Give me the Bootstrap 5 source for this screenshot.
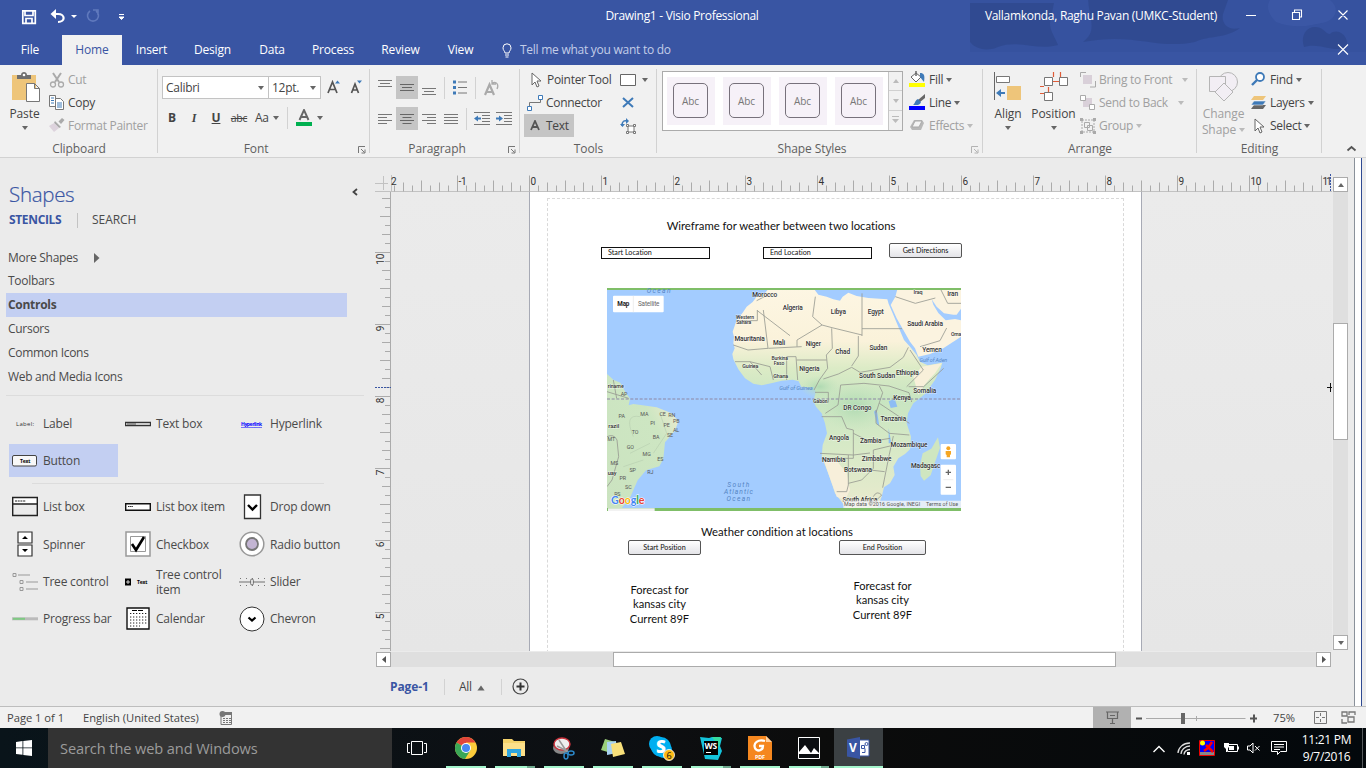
<!DOCTYPE html>
<html lang="en">
<head>
<meta charset="utf-8">
<meta name="viewport" content="width=device-width, initial-scale=1">
<title>Drawing1 - Visio Professional</title>
<link href="https://cdn.jsdelivr.net/npm/bootstrap@5.3.0/dist/css/bootstrap.min.css" rel="stylesheet">
<style>
:root{--blue:#3955a3;--ink:#444;--dim:#a0a0a0;--chrome:#ebebeb;--edge:#ababab}
html,body{height:100%;overflow:hidden}
body{font:12px/16px "Open Sans","Noto Sans",sans-serif;color:var(--ink);background:var(--chrome);width:1366px;height:768px;letter-spacing:-.29px}
svg{display:block;flex:none}
.dim{color:var(--dim)}
.tri{flex:none;width:0;height:0;border:3.5px solid transparent;border-top:4px solid #666;border-bottom:0}
.dim .tri,.tri.off{border-top-color:#bbb}
/* title bar and tabs */
.topzone{height:65px;background:var(--blue);color:#fff}
.scribble{left:970px;top:0;z-index:0}
.titlerow{height:35px}.titlerow .quick{width:130px;padding:8px 0 0 20px}
.doc{width:160px;margin-left:472px}.user{width:240px;margin-left:219px;margin-right:22px;white-space:nowrap}
.tabs{height:30px;padding-left:8px;letter-spacing:-.15px}
.tabs>span{height:30px;display:flex;align-items:center;justify-content:center}
.tabs .on{background:#f1f1f1;color:var(--blue);margin-left:10px}
.tabs .tell{color:#c3cde8;letter-spacing:-.26px}
.w44{width:44px}.w60{width:60px}.w59{width:59px}.w63{width:63px}.w56{width:56px}.w66{width:66px}.w69{width:69px}.w51{width:51px}
/* ribbon */
.ribbon{height:93px;background:#f1f1f1;border-bottom:1px solid #d2d2d2}
.grp{position:relative;display:flex;flex-direction:column;height:92px;flex:none}
.grp::after{content:"";position:absolute;right:0;top:4px;bottom:4px;width:1px;background:#d2d2d2}
.g158{width:158px}.g212{width:212px}.g150{width:150px}.g137{width:137px}.g326{width:326px}.g214{width:214px}.g125{width:125px}
.body3{height:76px;display:flex;padding-top:3px}
.lab{height:16px;display:flex;color:#5f5f5f;letter-spacing:-.1px}.lab span{flex:1;text-align:center}
.lab svg{margin:5px 4px 0 4px}
.r{height:23px;display:flex;align-items:center;white-space:nowrap;gap:3px}
.big{display:flex;flex-direction:column;align-items:center;text-align:center;padding-top:4px;letter-spacing:-.1px}
.big span+.tri,.big .tri.mt-1{margin-top:4px}
.combo{height:23px;border:1px solid #c3c3c3;background:#fff;display:flex;align-items:center;justify-content:space-between;padding:0 4px 0 3px}
.cell{width:22px;height:23px;display:flex;align-items:center;justify-content:center;flex:none}
.hl{background:#c5c5c5}
.vs{width:1px;height:22px;background:#d2d2d2;flex:none}
.gal{width:241px;height:60px;border:1px solid var(--edge);background:#fff;margin:3px 0 0 5px}
.thumb{width:48px;height:48px;background:#f6f1f8;padding:6px;margin:5px 4px 0 4px}
.thumb div{width:35px;height:35px;border:1px solid #77717b;border-radius:5px;display:flex;align-items:center;justify-content:center;font-size:10px;color:#777;letter-spacing:-.1px}
.galbar{width:14px;background:#f1f1f1;border-left:1px solid #c6c6c6}
.galbar div{height:19.4px;display:flex;align-items:center;justify-content:center;border-bottom:1px solid #d0d0d0}
.galbar .up{transform:rotate(180deg)}
/* shapes pane */
.work{height:548px}
.pane{width:375px;color:#4a4a4a}
.ttl{font-size:20.5px;line-height:26px;color:var(--blue);padding:23px 0 0 9px;height:50px;letter-spacing:-.3px;font-weight:300;-webkit-text-stroke:.2px var(--blue)}
.stn{height:24px;padding-left:9px}
.names>div{height:24px;padding-left:2px;margin:0 28px 0 6px;display:flex;align-items:center}
.pick{background:#c3cff2}
.rule1{height:1px;background:#dcdcdc}
.st{display:grid;grid-template-columns:113px 114px 125px;margin-left:9px;letter-spacing:-.2px}
.st>div{height:37px;display:flex;align-items:center;line-height:15px}
.st svg{margin-right:5px;margin-left:3px}
/* drawing window */
.draw{width:979px}
.sheetarea{width:941px;height:459px;overflow:hidden;position:relative;background:linear-gradient(#ebebeb,#e6e6e6)}
.paper{position:absolute;left:138px;top:0;width:613px;height:459px;background:#fff;border:solid #a7aab5;border-width:0 1px}
.marg{position:absolute;left:17px;top:6px;width:577px;height:470px;border:1px dashed #d9d9d9}
.it{position:absolute;white-space:nowrap;color:#111;font-family:Lato,"Open Sans",sans-serif;text-align:center;letter-spacing:0;font-variant-ligatures:none}
.head1{font-size:11.3px;line-height:15px}
.field{border:1px solid #111;height:12px;width:109px;font-size:7.2px;line-height:9px;text-align:left;padding-left:6px}
.pbtn{border:1px solid #555;border-radius:2px;background:linear-gradient(#fff,#e4e4e8);height:15px;font-size:7.2px;line-height:13px}
.fc{font-size:11.1px;line-height:14.4px}
.sbtn{width:15px;height:15px;border:1px solid var(--edge);background:#fff;display:flex;align-items:center;justify-content:center;flex:none}
.trk{background:#dfdfdf}
.th{background:#fff;border:1px solid var(--edge)}
/* bars */
.status{height:22px;background:#f1f1f1;border-top:1px solid #bdbdbd;font-size:11.2px;letter-spacing:-.02px}
.task{height:40px;background:linear-gradient(90deg,#09141a,#0d0f12 45%,#0c0c0c 60%,#03080c)}
.find{width:344px;background:#333;color:#9b9b9b;font-size:14.6px;padding-left:12px;letter-spacing:-.1px}
.app{width:49px;height:40px;display:flex;align-items:center;justify-content:center;position:relative}
.app.run::after{content:"";position:absolute;left:4.5px;width:40px;bottom:0;height:2px;background:#a4f5cc}
.app.many::before{content:"";position:absolute;right:4.5px;width:8px;bottom:0;height:2px;background:#6fa98e;z-index:1}
.app.act{background:#3b4043}.app.act::after{left:0;width:49px}
.clock{width:65px;margin:0 3px 0 4px;line-height:17px}
</style>
</head>
<body class="d-flex flex-column">
<svg width="0" height="0" class="position-absolute"><defs>
<symbol id="launch" viewBox="0 0 8 8"><path d="M.5 7V.5H7M3 3l3.500 3.500M7 3.500V7H3.500" fill="none" stroke="#777"/></symbol>
<symbol id="arrow" viewBox="0 0 10 16"><path d="M1 1v12l3-3 2 5 2-1-2-5h4z" fill="#fff" stroke="#666" stroke-width="1"/></symbol>
</defs></svg>

<header class="topzone position-relative">
  <svg class="position-absolute scribble" width="396" height="52" viewBox="0 0 396 52"><path d="M0 0h396v52H0z" fill="#314d97" opacity=".35"/><path d="M0 3h84l-4 20c0 8 4 12 8 22-20 6-40-6-60 2-14 6-24 0-28-5zM118 0h140l-5 14c-2 10 5 17 17 14-15 11-30 7-45 14-40 8-60-10-112 0 15-12 6-22 5-44zM334 47c-4-12 3-21 12-20 9 1 9 7 14 7 6-6 17 0 17 9 0 5-4 6-7 6-12 1-22-6-36-2z" fill="#2e478c" opacity=".7"/><path d="M300 0h60c10 8 6 18-4 22-14 3-30 8-50 0-8-8-10-16-6-22z" fill="#4460b0" opacity=".4"/></svg>
  <div class="titlerow d-flex position-relative">
    <div class="quick d-flex">
      <svg width="104" height="17" viewBox="20 8 104 17"><path d="M22.800 10.800h12.500v12.500h-12.500zM25 11v4.500h8V11M26 23v-4.500h6V23" fill="none" stroke="#fff" stroke-width="1.700"/><path d="M53 14h5c7.500 0 7.500 8 0 8" fill="none" stroke="#fff" stroke-width="2.200"/><path d="M50.500 14l5.500-5v10z" fill="#fff"/><path d="M71 15h6l-3 3z" fill="#fff"/><path d="M90 11a5.500 5.500 0 1 0 6 0M93 10h5v5" fill="none" stroke="#6079bd" stroke-width="1.600"/><path d="M119 14.500h5M119 17h5l-2.500 2.500z" stroke="#fff" fill="#fff" stroke-width="1"/></svg>
    </div>
    <div class="doc d-flex align-items-center justify-content-center pb-1">Drawing1 - Visio Professional</div>
    <div class="user d-flex align-items-center justify-content-center pb-1">Vallamkonda, Raghu Pavan (UMKC-Student)</div>
    <svg width="110" height="30" viewBox="1243 0 110 30"><path d="M1246 15.500h10M1292.500 12.500h7v7h-7zM1294.500 12v-2h7v7h-2M1338.500 10.500l9 9m0-9l-9 9" fill="none" stroke="#fff" stroke-width="1.100"/></svg>
  </div>
  <nav class="tabs d-flex position-relative"><span class="w44">File</span><span class="w60 on">Home</span><span class="w59">Insert</span><span class="w63">Design</span><span class="w56">Data</span><span class="w66">Process</span><span class="w69">Review</span><span class="w51">View</span>
    <span class="tell ms-3 gap-2"><svg width="10" height="15" viewBox="0 0 10 15"><path d="M3 10C3 8 1 7.500 1 4.800a4 4 0 0 1 8 0C9 7.500 7 8 7 10zM3 12h4M3.500 14h3" fill="none" stroke="#fff"/></svg>Tell me what you want to do</span>
    <svg class="ms-auto me-3 mt-2" width="16" height="14" viewBox="0 0 16 14"><path d="M4 1.500l10 10m0-10l-10 10" stroke="#fff" stroke-width="1.100"/></svg>
  </nav>
</header>

<section class="ribbon d-flex">
  <div class="grp g158">
    <div class="body3">
      <div class="big" style="width:49px"><svg class="ms-1" width="29" height="31" viewBox="0 0 29 31"><path d="M0 3h24v25H0z" fill="#eec57a"/><path d="M5 7V3h4c0-4 6-4 6 0h4v4z" fill="#6f6f6f"/><circle cx="12" cy="3" r="1.300" fill="#fff"/><path d="M14.500 11.500h8l5 5v13h-13zM22.500 11.500v5h5" fill="#fff" stroke="#777"/></svg><span style="margin-top:3px">Paste</span><i class="tri mt-1"></i></div>
      <div><div class="r dim"><svg width="16" height="16" viewBox="0 0 16 16"><path d="M4 1l6 9M12 1L6 10" stroke="#aaa" stroke-width="2"/><circle cx="4" cy="12.500" r="2.500" fill="none" stroke="#aaa" stroke-width="1.300"/><circle cx="12" cy="12.500" r="2.500" fill="none" stroke="#aaa" stroke-width="1.300"/></svg>Cut</div>
      <div class="r"><svg width="16" height="15" viewBox="0 0 16 15"><path d="M.5.5h6v11h-6z" fill="#fff" stroke="#777"/><path d="M6.500 3.500h5l3 3v8h-8z" fill="#fff" stroke="#777"/><path d="M2 3h3M2 5.500h3M2 8h3M8 8h5M8 10h5M8 12h5" stroke="#3e7ab8"/></svg>Copy</div>
      <div class="r dim"><svg width="16" height="15" viewBox="0 0 16 15"><path d="M13 0l2.500 2L12 6 9.500 3.500z" fill="#aaa"/><path d="M6 3l6 6-2 1-5-5z" fill="#aaa"/><path d="M5 5l5 5-5 4-5-6z" fill="#ddd3dd"/></svg>Format Painter</div></div>
    </div><div class="lab"><span>Clipboard</span></div>
  </div>
  <div class="grp g212">
    <div class="body3 flex-column">
      <div class="d-flex" style="margin:8px 0 8px 4px"><div class="combo" style="width:107px">Calibri<i class="tri"></i></div><div class="combo border-start-0" style="width:52px">12pt.<i class="tri"></i></div>
      <svg class="ms-1" width="40" height="20" viewBox="325 75.500 40 20"><path d="M328 92.500l4.500-11 4.500 11M329.500 89h6.500M351.500 92.500l3.500-9 3.500 9M352.500 89.500h5" fill="none" stroke="#555" stroke-width="1.700"/><path d="M335 83l2.500-3 2.500 3zM357 80h5l-2.500 3z" fill="#3e7ab8"/></svg></div>
      <div class="d-flex align-items-center" style="height:22px;margin-left:3px"><span class="cell fw-bold">B</span><span class="cell fw-bold fst-italic" style="font-family:'Liberation Serif'">I</span><span class="cell fw-bold text-decoration-underline">U</span><span class="cell text-decoration-line-through" style="width:24px;font-size:10.500px">abc</span><span class="ms-1">Aa</span><i class="tri ms-1"></i><i class="vs ms-2 me-2"></i>
      <svg width="16" height="18" viewBox="0 0 16 18"><path d="M3.500 11L8 1l4.500 10M5 8h6" fill="none" stroke="#666" stroke-width="1.900"/><path d="M0 13h16v4H0z" fill="#00b050"/></svg><i class="tri" style="margin-left:5px"></i></div>
    </div><div class="lab"><span>Font</span><svg width="8" height="8"><use href="#launch"/></svg></div>
  </div>
  <div class="grp g150">
    <div class="body3 flex-column">
      <div class="d-flex align-items-center" style="margin:8px 0 8px 4px"><span class="cell"><svg width="14" height="17"><path d="M0 1.500h14M2 4.500h10M0 7.500h14" stroke="#777"/></svg></span><span class="cell hl"><svg width="14" height="17"><path d="M0 5.500h14M2 8.500h10M0 11.500h14" stroke="#666"/></svg></span><span class="cell"><svg width="14" height="17"><path d="M0 9.500h14M2 12.500h10M0 15.500h14" stroke="#777"/></svg></span><i class="vs" style="margin-left:4px"></i>
      <svg style="margin:0 8px" width="14" height="15"><path d="M5 2h9M5 7.500h9M5 13h9" stroke="#777"/><path d="M0 .5h3v3H0zM0 6h3v3H0zM0 11.500h3v3H0z" fill="#3e7ab8"/></svg><i class="vs"></i><svg class="ms-2" width="16" height="16"><path d="M1 15L5.500 4.500 10 15M2.500 12h6.500" fill="none" stroke="#aaa" stroke-width="2.200"/><path d="M8 3c5-2 7 2 5 6M8 0v4h4" fill="none" stroke="#aaa" stroke-width="1.300"/></svg></div>
      <div class="d-flex align-items-center" style="margin-left:4px"><span class="cell"><svg width="14" height="12"><path d="M0 1.500h14M0 4.500h9M0 7.500h14M0 10.500h9" stroke="#777"/></svg></span><span class="cell hl"><svg width="14" height="12"><path d="M0 1.500h14M2.500 4.500h9M0 7.500h14M2.500 10.500h9" stroke="#666"/></svg></span><span class="cell"><svg width="14" height="12"><path d="M0 1.500h14M5 4.500h9M0 7.500h14M5 10.500h9" stroke="#777"/></svg></span><span class="cell"><svg width="14" height="12"><path d="M0 1.500h14M0 4.500h14M0 7.500h14M0 10.500h14" stroke="#777"/></svg></span><i class="vs" style="margin:0 7px 0 4px"></i>
      <svg width="38" height="14"><path d="M0 .5h16M8 3.500h8M8 6.500h8M8 9.500h8M0 12.500h16M22 .5h16M30 3.500h8M30 6.500h8M30 9.500h8M22 12.500h16" stroke="#777"/><path d="M7 5.500v2H4v2L0 6.500l4-3v2zM22 5.500v2h3v2l4-3-4-3v2z" fill="#3e7ab8"/></svg></div>
    </div><div class="lab"><span>Paragraph</span><svg width="8" height="8"><use href="#launch"/></svg></div>
  </div>
  <div class="grp g137">
    <div class="body3"><div style="width:96px;padding-left:4px">
      <div class="r ps-1"><svg style="margin:0 3px" width="10" height="16"><use href="#arrow"/></svg>Pointer Tool</div>
      <div class="r ps-1" style="margin-left:-1px"><svg width="16" height="16"><path d="M.5 11.500h4v4h-4zM11.500.5h4v4h-4z" fill="#fff" stroke="#3e7ab8"/><path d="M2.500 11V7.500h11V5" fill="none" stroke="#777"/></svg>Connector</div>
      <div class="r hl ps-1" style="width:50px"><svg style="margin:0 3px 0 2px" width="10" height="11"><path d="M1 10L5 1l4 9M2.500 7h5" fill="none" stroke="#555" stroke-width="1.800"/></svg>Text</div></div>
      <div><div class="r" style="margin-left:4px;gap:6px"><svg width="16" height="12"><path d="M.5.5h15v11H.5z" fill="#fff" stroke="#666"/></svg><i class="tri"></i></div><div class="r" style="margin-left:6px"><svg width="12" height="11"><path d="M1 1l10 9M11 1L1 10" stroke="#3e7ab8" stroke-width="2"/></svg></div><div class="r" style="margin-left:4px"><svg width="16" height="16"><path d="M2 8c0-5 2-6 6-5" fill="none" stroke="#3e7ab8" stroke-width="1.500"/><path d="M0 6h5L2.500 9zM6 0l3 3-3 3z" fill="#3e7ab8"/><path d="M8 8h6v6H8z" fill="#fff" stroke="#777"/><path d="M6.500 6.500h2v2h-2zM13.500 6.500h2v2h-2zM6.500 13.500h2v2h-2zM13.500 13.500h2v2h-2z" fill="#fff" stroke="#777"/></svg></div></div>
    </div><div class="lab"><span>Tools</span></div>
  </div>
  <div class="grp g326">
    <div class="body3"><div class="gal d-flex"><div class="thumb"><div>Abc</div></div><div class="thumb"><div>Abc</div></div><div class="thumb"><div>Abc</div></div><div class="thumb"><div>Abc</div></div><div class="galbar ms-auto"><div><i class="tri off up"></i></div><div><i class="tri off"></i></div><div class="border-0"><svg width="7" height="8"><path d="M0 .5h7" stroke="#bbb"/><path d="M0 3h7L3.500 7z" fill="#bbb"/></svg></div></div></div>
      <div style="margin-left:6px"><div class="r"><svg width="17" height="17"><path d="M2 6l5-4 5 4-5 5z" fill="#fff" stroke="#666"/><path d="M7 5V0" stroke="#666" stroke-width="1.500"/><path d="M11 2c4 0 5 2 4 9l-4-5z" fill="#3e7ab8"/><path d="M0 12h16v4H0z" fill="#ff0"/></svg>Fill<i class="tri"></i></div>
      <div class="r"><svg width="17" height="17"><path d="M16 0v4l-5 4-2-2z" fill="#666"/><path d="M9 5l3 3c-1 4-5 3-8 3 2-1 2-5 5-6z" fill="#3e7ab8"/><path d="M0 12h16v4H0z" fill="#00f"/></svg>Line<i class="tri"></i></div>
      <div class="r dim"><svg width="17" height="15"><path d="M5 2h8l2 3-3 7H3L1 9z" fill="#b8b8b8"/><path d="M6 3h7l-3 6H3z" fill="#f4f4f4" stroke="#aaa"/></svg>Effects<i class="tri"></i></div></div>
    </div><div class="lab"><span>Shape Styles</span><svg opacity=".5" width="8" height="8"><use href="#launch"/></svg></div>
  </div>
  <div class="grp g214">
    <div class="body3">
      <div class="big" style="width:50px"><svg class="ms-0" width="28" height="30"><path d="M.5 0v28" stroke="#666"/><path d="M2.500 4.500h13v6h-13z" fill="#fff" stroke="#777"/><path d="M13 14h14v14H13z" fill="#eec57a"/><path d="M11 21H5" stroke="#3e7ab8" stroke-width="2"/><path d="M2 21l5-4v8z" fill="#3e7ab8"/></svg><span style="margin-top:4px">Align</span><i class="tri mt-1"></i></div>
      <div class="big" style="width:41px"><svg width="30" height="30"><path d="M14.500 0v5M21.500 0v5M14 9.500h6M1 14.500h4M9.500 15v5M1 21.500h4" stroke="#e05c38" stroke-width="1.200"/><path d="M5.500 5.500h8v8h-8zM20.500 5.500h8v8h-8zM5.500 20.500h8v8h-8z" fill="#fff" stroke="#777"/></svg><span style="margin-top:4px">Position</span><i class="tri mt-1"></i></div>
      <div style="margin-left:6px"><div class="r dim"><svg width="16" height="16"><path d="M3 3h9v9H3z" fill="#d9d0d9"/><path d="M.5 5V.5H6M15.500 9v6H10" fill="none" stroke="#aaa"/></svg>Bring to Front<i class="tri" style="margin-left:7px"></i></div>
      <div class="r dim"><svg width="16" height="16"><path d="M3 3h9v9H3z" fill="#d9d0d9"/><path d="M.5.5h5v5h-5zM9.500 9.500h5v5h-5z" fill="#fff" stroke="#aaa"/></svg>Send to Back<i class="tri" style="margin-left:7px"></i></div>
      <div class="r dim"><svg width="16" height="16"><path d="M2 2h12v12H2z" fill="none" stroke="#aaa" stroke-dasharray="2 1"/><path d="M4.500 4.500h5v5h-5zM7.500 7.500h5v5h-5z" fill="none" stroke="#aaa"/><path d="M0 0h3v3H0zM13 0h3v3h-3zM0 13h3v3H0zM13 13h3v3h-3z" fill="#aaa"/></svg>Group<i class="tri"></i></div></div>
    </div><div class="lab"><span>Arrange</span></div>
  </div>
  <div class="grp g125">
    <div class="body3"><div class="big dim" style="width:53px"><svg width="30" height="30"><circle cx="19" cy="10" r="9.500" fill="#f2eef4" stroke="#b5b5b5"/><path d="M.5 4.500h16v15H.5z" fill="#f2eef4" stroke="#b5b5b5"/><path d="M15 11l9 9-9 9-9-9z" fill="#f2eef4" stroke="#b5b5b5"/></svg><span style="margin-top:4px">Change</span><span class="d-flex align-items-center">Shape<i class="tri" style="margin-left:3px"></i></span></div>
      <div style="margin-left:1px"><div class="r"><svg width="16" height="15"><circle cx="9" cy="5" r="4" fill="#fff" stroke="#3e7ab8" stroke-width="1.800"/><path d="M6 8l-5 5" stroke="#3e7ab8" stroke-width="2.400"/></svg>Find<i class="tri"></i></div>
      <div class="r"><svg width="16" height="14"><path d="M3 9h12l-3 4H0z" fill="#666"/><path d="M3 5h12l-3 4H0z" fill="#3e7ab8" stroke="#f1f1f1" stroke-width=".6"/><path d="M3 0h12l-3 4H0z" fill="#eec57a"/></svg>Layers<i class="tri"></i></div>
      <div class="r"><svg style="margin:0 3px" width="10" height="16"><use href="#arrow"/></svg>Select<i class="tri"></i></div></div>
    </div><div class="lab"><span>Editing</span></div>
  </div>
  <svg class="align-self-end ms-4 mb-1" width="11" height="8"><path d="M1.500 5.500L5.500 2l4 3.500" fill="none" stroke="#555" stroke-width="1.800"/></svg>
</section>

<main class="work d-flex">
  <aside class="pane">
    <div class="ttl d-flex">Shapes<svg class="ms-auto" style="margin:7px 17px 0 0" width="6" height="8"><path d="M5 1L1.500 4 5 7" fill="none" stroke="#444" stroke-width="1.800"/></svg></div>
    <div class="stn d-flex align-items-center"><b style="color:var(--blue);width:68px;letter-spacing:-.35px">STENCILS</b><i class="vs" style="height:15px;background:#c3c3c3;margin-right:14px"></i><span style="letter-spacing:-.05px">SEARCH</span></div>
    <div class="names" style="padding-top:14px"><div style="height:23px">More Shapes<svg style="margin-left:16px" width="6" height="10"><path d="M0 0l5.500 5L0 10z" fill="#666"/></svg></div><div>Toolbars</div><div class="pick fw-bold">Controls</div><div>Cursors</div><div>Common Icons</div><div>Web and Media Icons</div></div>
    <div class="rule1" style="margin:6px 11px 9px 6px"></div>
    <div class="st">
      <div><svg width="26" height="10"><text x="4" y="7" font-size="6" fill="#333" textLength="18">Label:</text></svg>Label</div>
      <div><svg width="26" height="6"><path d="M.5 1.500h25v3H.5z" fill="#fff" stroke="#333" stroke-width="1.300"/><path d="M2 3h9" stroke="#555"/></svg>Text box</div>
      <div><svg width="26" height="10"><text x="2" y="7" font-size="5" font-weight="700" fill="#00f" text-decoration="underline" textLength="21">Hyperlink</text></svg>Hyperlink</div>
      <div class="pick" style="width:109px;height:33px;margin:2px 0"><svg width="26" height="12"><rect x=".5" y=".5" width="24" height="10.500" rx="1.500" fill="#f8f8f8" stroke="#444"/><text x="8" y="7.500" font-size="5" font-weight="700">Text</text></svg>Button</div>
    </div>
    <div class="rule1" style="margin:4px 51px 4px 32px"></div>
    <div class="st">
      <div><svg width="26" height="21"><path d="M1 2h24v5.500H1z" fill="#fff"/><path d="M.7 1.500h24.600v18H.7zM0 8h26" fill="none" stroke="#222" stroke-width="1.400"/><path d="M3 5h11" stroke="#222" stroke-dasharray="2 .7"/></svg>List box</div>
      <div><svg width="26" height="8"><path d="M.7.7h24.600v6.600H.7z" fill="#fff" stroke="#111" stroke-width="1.400"/><path d="M3 3.500h5" stroke="#222" stroke-dasharray="1.500 .6"/></svg>List box item</div>
      <div><svg width="26" height="26"><path d="M5.500 1h16v23.500h-16z" fill="#fff" stroke="#333" stroke-width="1.300"/><path d="M9 11l4.500 4.500L18 11" fill="none" stroke="#000" stroke-width="2.400"/></svg>Drop down</div>
      <div style="height:38px"><svg width="26" height="26"><path d="M6 1h14v11H6zM6 14h14v11H6z" fill="#fff" stroke="#333" stroke-width="1.200"/><path d="M10 8l3-3 3 3zM10 18l3 3 3-3z"/></svg>Spinner</div>
      <div style="height:38px"><svg width="26" height="26"><path d="M1 1h24v24H1z" fill="#fff" stroke="#999" stroke-width="1.500"/><path d="M5.500 5.500h15v15h-15z" fill="#fff" stroke="#999"/><path d="M7 13l4 6 8-13" fill="none" stroke="#000" stroke-width="2.600"/></svg>Checkbox</div>
      <div style="height:38px"><svg width="26" height="26"><circle cx="13" cy="13" r="11.800" fill="#fff" stroke="#999" stroke-width="1.500"/><circle cx="13" cy="13" r="6" fill="#c3b5d3" stroke="#777" stroke-width="1.800"/></svg>Radio button</div>
      <div><svg width="26" height="20"><path d="M1 1.500h3v3H1zM8 8.500h3v3H8zM8 15.500h3v3H8z" fill="none" stroke="#999"/><path d="M6 3h12M14 10h12M14 17h12" stroke="#999"/></svg>Tree control</div>
      <div><svg width="26" height="10"><path d="M0 1.500h6v7H0z"/><path d="M1 5h4M3 3v4" stroke="#fff" stroke-width=".8"/><text x="12" y="7" font-size="5" font-weight="700">Text</text></svg>Tree control<br>item</div>
      <div><svg width="26" height="8"><path d="M0 4h26" stroke="#999" stroke-width="1.500"/><path d="M1 .5h25M1 7.500h25" stroke="#777" stroke-dasharray="1 5"/><rect x="11.500" y="1" width="3" height="6" rx="1.500" fill="#ddd" stroke="#777"/></svg>Slider</div>
      <div><svg width="26" height="4"><path d="M0 1.800h26" stroke="#bbb" stroke-width="3"/><path d="M1 1.800h12" stroke="#7fca83" stroke-width="2"/></svg>Progress bar</div>
      <div><svg width="26" height="24"><path d="M2 1h22v21H2z" fill="#fff" stroke="#111" stroke-width="1.400"/><path d="M7 3.500h12" stroke="#000" stroke-dasharray="5 1"/><path d="M5 6.500h17M5 10h17M5 13h17M5 16h17M5 19h10" stroke="#222" stroke-dasharray="1.300 1.700"/></svg>Calendar</div>
      <div><svg width="26" height="26"><circle cx="13" cy="13" r="12" fill="#fff" stroke="#333"/><path d="M9.500 11.500l3.500 3 3.500-3" fill="none" stroke="#000" stroke-width="2.200"/></svg>Chevron</div>
    </div>
  </aside>

  <section class="draw d-flex flex-column">
    <div class="d-flex">
      <div>
        <svg id="rulerTop" width="957" height="34" viewBox="375 158 957 34" font-size="10" font-family="Roboto,sans-serif" fill="#333"></svg>
        <div class="d-flex">
          <svg id="rulerSide" width="16" height="459" viewBox="375 192 16 459" font-size="10" font-family="Roboto,sans-serif" fill="#333"></svg>
          <div class="sheetarea">
            <div class="paper"><div class="marg"></div></div>
            <div class="it head1" style="left:241px;top:26px;width:298px">Wireframe for weather between two locations</div>
            <div class="it field" style="left:210px;top:55px">Start Location</div>
            <div class="it field" style="left:372px;top:55px">End Location</div>
            <div class="it pbtn" style="left:498px;top:51px;width:73px">Get Directions</div>
            <svg class="position-absolute" style="left:216px;top:96px" width="354" height="223" viewBox="21 24 1062 669" font-family="Roboto,sans-serif">
              <defs><linearGradient id="sand" x1="0" y1="0" x2="0" y2="1"><stop offset="0" stop-color="#fdf6e3"/><stop offset=".24" stop-color="#faf2da"/><stop offset=".36" stop-color="#dcebc6"/><stop offset=".5" stop-color="#c8e5c1"/><stop offset=".7" stop-color="#d6e9c6"/><stop offset=".9" stop-color="#e2eacb"/><stop offset="1" stop-color="#ece9cf"/></linearGradient>
              <radialGradient id="forest"><stop offset="0" stop-color="#b0dab2"/><stop offset="1" stop-color="#c4e4be" stop-opacity="0"/></radialGradient>
              <linearGradient id="brz" x1="0" x2="1" y1="1" y2="0"><stop offset="0" stop-color="#cbe3c0"/><stop offset=".65" stop-color="#cde6c2"/><stop offset=".9" stop-color="#f0ebd0"/></linearGradient></defs>
              <path d="M21 24h1062v669H21z" fill="#a3ccff"/>
              <path d="M507 24L495 40 470 50 458 66 440 80 428 98 410 120 398 155 402 170 400 190 404 205 397 222 400 238 415 268 435 295 460 311 485 316 520 308 545 302 578 299 596 304 604 320 630 322 643 320 647 338 640 362 648 380 665 400 675 430 681 460 668 495 665 530 683 575 697 615 705 640 727 668 740 690 830 690 845 650 852 622 870 610 884 585 880 560 895 535 915 522 930 508 933 470 920 430 924 400 940 370 975 342 1005 300 1022 265 1027 248 983 256 960 245 950 225 930 200 912 180 895 140 878 100 866 72 862 58 805 54 770 48 745 38 728 50 720 62 700 58 680 50 655 44 640 24z" fill="url(#sand)"/>
              <ellipse cx="765" cy="380" rx="100" ry="75" fill="url(#forest)"/><ellipse cx="660" cy="320" rx="60" ry="35" fill="url(#forest)"/>
              <path d="M955 345q15-30 50-65l20-30-60 10-25 30z" fill="#f8f0da"/><path d="M668 530l40 10 32 40 10 50-15 30-25-10-27-75z" fill="#f7efda"/>
              <path d="M893 24L886 50 872 75 890 115 910 150 930 185 945 205 955 230 990 222 1030 205 1083 170 1083 24z" fill="#fbf3e0"/><path d="M995 58l15 22 22 20 28 4 10 0 13-18v35l-18-4-28 4-22-22-15-25z" fill="#a3ccff"/>
              <path d="M1014 472l6 32-14 40-14 42-20 16-10-14-2-32 8-36 26-14z" fill="#cfe6c0"/>
              <path d="M21 282l20 18 20 8 15 28 14 20-4 20 14-4 22 3 48 7 45 18 20 24-10 28-30 35-5 50-12 22-40 12-25 30-22 50-34 44H21z" fill="url(#brz)"/>
              <path d="M866 364l18-8 8 24-20 4zM822 395l8 35 8 8-8-50zM866 445l8 45-8 0z" fill="#8dbdf3"/>
              <path d="M470 62l35-18M472 90v32h-60M472 92l98 75M490 90l14 115-60 5-44-15M505 205l100-5M646 50l-8 60 28 25-75 45v20M666 135l30 8 90 22M786 168V40M786 146h120M695 145l2 60-18 20 4 40-25 35-16 30M775 168v60l-20 30M755 262l25 15 90-15 40-30 15-30M755 262l-40 20-45 15M588 230l5 70M590 240h90M560 300v-70l28 0M520 300l-10-40-60-15-45 0M450 245l35 40M722 315l70-5 75 8 60 20 8 28M722 315l-8 60-38 25M645 337h40v30h-40M665 410h60l15 35 20 5 0 85-95 0M760 460l50 25 60-10M660 520l100 5 50-6M745 525v90M745 615l-5 20h-30M745 610l40-10 35-35 0-55 50-12M838 370l90 60M828 390l0 40 40 30 60 5M880 468l-12 55-20 100M926 320l45 0 60-55M838 318l10 20-20 60M930 210l40 60-50 50M960 200l60-18 20-38M886 50l60 20 60-16M1083 70h-40l-20-40M810 570l44 5M820 650q10-20 25-5l-12 12M21 335l65 20M40 300l10 55M21 470q20-10 30 10l5 50-20 70-15 20" fill="none" stroke="#989a91" stroke-width="2.500" stroke-linejoin="round"/>
              <path d="M100 470q-30-70 20-60M90 520l60-30M180 400l20 60-40 60M70 560l60-20" fill="none" stroke="#b8ceb0" stroke-width="2"/>
              <path d="M21 357h1062" stroke="#8d87a4" stroke-width="3" stroke-dasharray="9 5"/>
              <path d="M21 24h1062v6H21zM21 684h1062v9H21z" fill="#7fbe68"/><path d="M24 685h140v8H24z" fill="#f2f2f2"/>
              <g font-size="19.500" fill="#333" font-weight="500" text-anchor="middle" stroke="#fff" stroke-width="3" stroke-opacity=".55" paint-order="stroke" id="countries"></g>
              <g font-size="16" fill="#555" text-anchor="middle" id="states"></g>
              <g font-size="20" font-style="italic" fill="#5585c4" text-anchor="middle"><text x="178" y="40" letter-spacing="4">Ocean</text><text x="417" y="622" letter-spacing="4">South</text><text x="417" y="643" letter-spacing="3">Atlantic</text><text x="417" y="664" letter-spacing="4">Ocean</text><text x="588" y="329" font-size="17">Gulf of Guinea</text><text x="1000" y="246" font-size="16">Gulf of Aden</text></g>
              <g><rect x="39" y="47" width="152" height="50" rx="3" fill="#fff"/><path d="M100 47v50" stroke="#e5e5e5" stroke-width="2"/><g font-size="19"><text x="52" y="77" font-weight="700" fill="#222" textLength="36">Map</text><text x="114" y="77" fill="#666" textLength="64">Satellite</text></g></g>
              <g font-size="32" font-weight="700" font-family="Lato,sans-serif" stroke="#fff" stroke-width="3" paint-order="stroke"><text x="33" y="671" textLength="100"><tspan fill="#4285f4">G</tspan><tspan fill="#ea4335">o</tspan><tspan fill="#fbbc05">o</tspan><tspan fill="#4285f4">g</tspan><tspan fill="#34a853">l</tspan><tspan fill="#ea4335">e</tspan></text></g>
              <path d="M730 662h353v22H730z" fill="#f5f5f5" opacity=".8"/><g font-size="16" fill="#555"><text x="732" y="678" textLength="228">Map data ©2016 Google, INEGI</text><text x="978" y="678" textLength="96">Terms of Use</text></g>
              <g fill="#fff"><rect x="1022" y="492" width="46" height="46" rx="3"/><rect x="1022" y="554" width="46" height="90" rx="3"/></g><path d="M1030 599h30" stroke="#e5e5e5" stroke-width="2"/><path d="M1037 577h16M1045 569v16M1037 622h16" stroke="#666" stroke-width="4"/><circle cx="1045" cy="505" r="6" fill="#f5a623"/><path d="M1037 513h16v10l-3 2v7h-10v-7l-3-2z" fill="#f5a623"/>
            </svg>
            <div class="it head1" style="left:286px;top:332px;width:200px">Weather condition at locations</div>
            <div class="it pbtn" style="left:237px;top:348px;width:73px">Start Position</div>
            <div class="it pbtn" style="left:448px;top:348px;width:87px">End Position</div>
            <div class="it fc" style="left:218px;top:391px;width:101px">Forecast for<br>kansas city<br>Current 89F</div>
            <div class="it fc" style="left:441px;top:387px;width:101px">Forecast for<br>kansas city<br>Current 89F</div>
            <svg class="position-absolute" style="left:935px;top:191px" width="6" height="9"><path d="M1 4.500h5M4.500 0v9" stroke="#111"/></svg>
          </div>
        </div>
      </div>
      <div class="d-flex flex-column" style="margin:19px 0 0 1px;width:15px;height:473px">
        <span class="sbtn"><i class="tri" style="transform:rotate(180deg)"></i></span><div class="trk" style="height:131px"></div><div class="th" style="height:117px"></div><div class="trk flex-grow-1"></div><span class="sbtn"><i class="tri"></i></span>
      </div>
    </div>
    <div class="d-flex" style="margin:1px 0 0 1px;width:955px;height:15px">
      <span class="sbtn"><svg width="4" height="7"><path d="M4 0v7L0 3.500z" fill="#555"/></svg></span><div class="trk" style="width:222px"></div><div class="th" style="width:503px"></div><div class="trk flex-grow-1"></div><span class="sbtn"><svg width="4" height="7"><path d="M0 0v7l4-3.500z" fill="#555"/></svg></span>
    </div>
    <div class="d-flex align-items-center flex-grow-1"><b style="color:var(--blue);margin-left:15px;width:54px;letter-spacing:-.1px">Page-1</b><i class="vs" style="height:16px"></i><span style="margin-left:14px">All</span><i class="tri" style="transform:rotate(180deg) scale(1.200);margin:2px 17px 0 6px"></i><i class="vs" style="height:16px"></i><svg style="margin-left:10px" width="17" height="17"><circle cx="8.500" cy="8.500" r="7.500" fill="none" stroke="#444" stroke-width="1.200"/><path d="M4.500 8.500h8M8.500 4.500v8" stroke="#333" stroke-width="2"/></svg></div>
  </section>
  <div style="width:8px;background:#fff;border-left:1px solid #8a919a;border-right:1px solid #2f4a92"></div>
</main>

<footer class="status d-flex align-items-center">
  <span style="margin-left:7px;width:76px">Page 1 of 1</span><span style="width:136px">English (United States)</span>
  <svg width="14" height="14"><path d="M2 5v8.500h10.500V3H6" fill="none" stroke="#777"/><path d="M6 1h7v3H6z" fill="#777"/><circle cx="3.500" cy="3" r="3" fill="#777"/><path d="M4 7.500h8M4 9.500h8M4 11.500h8" stroke="#777" stroke-dasharray="2 1"/></svg>
  <div class="ms-auto d-flex align-items-center justify-content-center" style="width:38px;height:21px;background:#b1b1b1"><svg width="13" height="13"><path d="M0 1h13M1.500 1v6.500h10V1M6.500 8v4M4 12.500h5M4 4.500h5" fill="none" stroke="#666" stroke-width="1.200"/></svg></div>
  <svg width="122" height="14" style="margin-left:4px" viewBox="0 0 122 14"><path d="M1 7.500h6M115 7.500h8M119 3.500v8" stroke="#555" stroke-width="2"/><path d="M11 7.500h99.500M61.500 5v5" stroke="#aaa"/><path d="M46 2h4v11h-4z" fill="#666"/></svg>
  <span style="margin-left:16px;width:41px">75%</span>
  <svg width="50" height="14" style="margin-right:2px"><path d="M.5.5h12v12H.5z" fill="none" stroke="#777"/><path d="M6.500 2v3M6.500 8v3M2 6.500h3M8 6.500h3" stroke="#777"/><path d="M28 1h5v4h-5zM28 8v4h5M35 4V1h6v3M34 6h6v5h-6z" fill="none" stroke="#777" stroke-width="1.300"/></svg>
</footer>

<div class="task d-flex">
  <div class="d-flex align-items-center justify-content-center" style="width:48px"><svg width="16" height="16"><path d="M0 2l6.500-.9V7.500H0zM7.300 1L16 0v7.500H7.300zM0 8.300h6.500v6.500L0 14zM7.300 8.300H16V16l-8.700-1z" fill="#fff"/></svg></div>
  <div class="find d-flex align-items-center">Search the web and Windows</div>
  <div class="app"><svg width="20" height="14"><path d="M4.500.5h11v13h-11zM3 2.500H.5v9H3M17 2.500h2.500v9H17" fill="none" stroke="#fff"/></svg></div>
  <div class="app run"><svg width="22" height="22" viewBox="0 0 22 22"><circle cx="11" cy="11" r="11" fill="#fccc3a"/><path d="M11 11L1.500 5.500A11 11 0 0 1 20.500 5.500H11z" fill="#e0453a"/><path d="M11 11L1.500 5.500A11 11 0 0 0 10 22l5.500-9z" fill="#3aa757"/><circle cx="11" cy="11" r="5" fill="#fff"/><circle cx="11" cy="11" r="4" fill="#4688f1"/></svg></div>
  <div class="app run many"><svg width="23" height="20"><path d="M0 1h9l2 2h11v15H0z" fill="#f5d36b"/><path d="M0 5h22v13H0z" fill="#fde08a"/><path d="M4 19v-8h14v8h-4v-4H8v4z" fill="#2ea5e0"/></svg></div>
  <div class="app run"><svg width="22" height="23"><ellipse cx="8" cy="11" rx="8" ry="6" fill="#888"/><ellipse cx="9" cy="7" rx="8" ry="6" fill="#eee" stroke="#c8323c" stroke-width="1.500"/><path d="M6 3l8 12M4 9l12 6" stroke="#999" stroke-width="1.500"/><g fill="none" stroke="#2c88c8" stroke-width="1.500"><ellipse cx="13" cy="19" rx="2" ry="3"/><ellipse cx="18" cy="16" rx="3" ry="2"/></g></svg></div>
  <div class="app run"><svg width="24" height="20"><path d="M4 1l10 3-4 11-10-3z" fill="#9bd07c"/><path d="M6 4l9-1 1 12-10 2z" fill="#a9d3f2"/><path d="M10 6l10-2 4 12-12 3z" fill="#f8e07a"/></svg></div>
  <div class="app run"><svg width="26" height="26"><circle cx="8" cy="9" r="8" fill="#00aff0"/><circle cx="15" cy="15" r="8" fill="#00aff0"/><circle cx="12" cy="12" r="10" fill="#00aff0"/><text x="7" y="18" font-size="17" font-weight="800" fill="#fff">S</text><circle cx="20" cy="20" r="5.500" fill="#fdb813" stroke="#fff" stroke-width=".8"/><text x="17.500" y="23.500" font-size="9" fill="#111">6</text></svg></div>
  <div class="app run many"><svg width="24" height="24"><path d="M1 1l9 1 3-1 10 1-2 8 2 5-4 9-13-1z" fill="#14c4dc"/><path d="M13 1l9 0-2 10z" fill="#36dca0"/><path d="M5 5h14v14H5z" fill="#000"/><text x="5.500" y="13" font-size="8.500" font-weight="700" fill="#fff">WS</text><path d="M7 16.500h5" stroke="#fff"/></svg></div>
  <div class="app run"><svg width="24" height="24"><path d="M0 0h18l6 6v18H0z" fill="#f5871f"/><path d="M18 0l6 6h-6z" fill="#ffd0a0"/><path d="M17 5c-7-2-12 2-10 7 2 4 8 3 8-2h-4" fill="none" stroke="#fff" stroke-width="2.300"/><text x="7" y="22.500" font-size="5.500" font-weight="700" fill="#fff">PDF</text></svg></div>
  <div class="app run many"><svg width="22" height="22"><path d="M.5.500h21v21H.500z" fill="#0b0e11" stroke="#fff"/><path d="M1 15l6-7 6 8 3-5 5 5v1H1z" fill="#fff"/></svg></div>
  <div class="app run act" style="margin-left:1px"><svg width="23" height="22"><path d="M12 3h10v16H12z" fill="#fff" stroke="#3955a3"/><path d="M14.500 8.500h3v3h-3zM15 15.500h3v-4" stroke="#3955a3" fill="none"/><circle cx="19.500" cy="7" r="1.500" stroke="#3955a3" fill="none"/><path d="M0 2.500L13 0v22L0 19.500z" fill="#3955a3"/><text x="2" y="15" font-size="12" font-weight="700" fill="#fff">V</text></svg></div>
  <svg class="ms-auto align-self-center" width="138" height="20" viewBox="1152 738 138 20"><path d="M1153.500 752l5.500-5.500 5.500 5.500" fill="none" stroke="#fff" stroke-width="1.400"/><path d="M1178 753c0-5 5-10 12-10M1181 754c0-4 4-8 9-8M1184 754.500c0-3 3-5 6-5" fill="none" stroke="#ddd" stroke-width="1.300"/><path d="M1187 752h3v3h-3z" fill="#fff"/><path d="M1199.500 740.500h15v15h-15z" fill="#00f" stroke="#e00"/><path d="M1200 752h14v3h-14z" fill="#888"/><circle cx="1202.500" cy="743" r="2.500" fill="#ff0"/><path d="M1204 751l4-3 4-6M1206 745l7 7" stroke="#f00" stroke-width="2.500"/><path d="M1227.500 744.500h10v7h-10zM1238.500 746.500v3" fill="none" stroke="#fff"/><path d="M1229 746h5v4h-5zM1224 743h5v4l-2 2v3h-1v-3l-2-2z" fill="#fff"/><path d="M1247.500 746v4h2.500l3 3v-10l-3 3zM1255 746l4.500 4.500m0-4.500l-4.500 4.500" fill="none" stroke="#fff"/><path d="M1271.500 741.500h15v10h-6l-3 3v-3h-6zM1274 744.500h10M1274 747h10M1274 749.500h6" fill="none" stroke="#fff"/></svg>
  <div class="clock text-white text-center align-self-center">11:21 PM<br>9/7/2016</div>
  <div style="width:4px;border-left:1px solid #55595c"></div>
</div>

<script>
// ruler ticks: 72 px per inch, one tick each eighth of an inch
const size = k => k % 8 === 0 ? 16 : k % 4 === 0 ? 11 : k % 2 === 0 ? 9 : 6;
let top_ = '<path d="M391 191.500H1332M391.500 175v17M375 191.500h16M375 183.500h13M383.500 176v14" stroke="#c2c2c2"/>', side = '<path d="M390.500 192v459" stroke="#ababab"/>';
for (let k = -15; k <= 88; k++) {
  const x = Math.round(529 + k * 9) + .5;
  top_ += `<path d="M${x} ${191.5 - size(k)}V191.500" stroke="#ababab"/>`;
  if (k % 8 === 0) top_ += `<text x="${x + 1}" y="185"${k === 88 ? ' textLength="9"' : ''}>${k / 8}</text>`;
}
top_ += '<text x="391" y="185">2</text><path d="M1330.500 174v17" stroke="#3955a3" stroke-dasharray="2 1"/>';
for (let k = 36; k <= 94; k++) {
  const y = Math.round(972 - k * 9) + .5;
  if (y < 195) continue;
  side += `<path d="M${391 - size(k)} ${y}H391" stroke="#ababab"/>`;
  if (k % 8 === 0) side += `<text transform="translate(384 ${y + 1.5}) rotate(-90)" text-anchor="end">${k / 8}</text>`;
}
side += '<path d="M375 387.500h16" stroke="#3955a3" stroke-dasharray="2 1"/>';
document.getElementById('rulerTop').innerHTML = top_;
document.getElementById('rulerSide').innerHTML = side;
const put = (id, list) => document.getElementById(id).innerHTML = list.map(([t, x, y, s]) => `<text x="${x}" y="${y}"${s ? ` font-size="${s}"` : ''}>${t}</text>`).join('');
put('countries', [['Morocco',494,51],['Algeria',578,91],['Libya',715,102],['Egypt',827,102],['Saudi Arabia',975,138],['Iraq',954,41,16],['Iran',1058,48],['Oma',1068,167,15],['Western',435,118,15],['Sahara',431,133,15],['Mauritania',449,184],['Mali',537,195],['Niger',640,198],['Chad',728,223],['Sudan',835,210],['Yemen',996,215],['Burkina',539,240,15],['Faso',537,255,15],['Guinea',451,265,16],['Ghana',542,294,16],['Nigeria',628,274],['South Sudan',831,294],['Ethiopia',922,284],['Somalia',974,338],['Kenya',906,360],['Gabon',661,369,15],['DR Congo',772,390],['Tanzania',880,424],['Angola',717,480],['Zambia',812,490],['Mozambique',927,502],['Namibia',701,547],['Zimbabwe',830,543],['Botswana',774,576],['Madagasc',977,565],['South Africa',780,665],['razil',41,443,18],['uay',36,585,17],['riname',47,325,16]]);
put('states', [['AP',72,349],['PA',65,414],['MA',133,408],['CE',188,408],['RN',215,411],['PB',229,428],['PI',158,434],['PE',200,441],['AL',228,455],['TO',105,463],['SE',210,472],['BA',168,478],['MT',34,483],['GO',91,506],['MG',140,527],['ES',181,543],['MS',43,556],['SP',98,576],['RJ',151,583],['PR',68,600],['SC',85,626],['RS',52,648]]);
</script>
<script src="https://cdn.jsdelivr.net/npm/bootstrap@5.3.0/dist/js/bootstrap.bundle.min.js"></script>
</body>
</html>
